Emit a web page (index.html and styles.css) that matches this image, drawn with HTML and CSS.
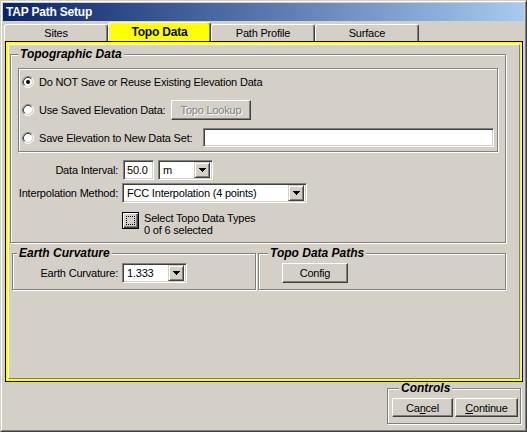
FILE: index.html
```html
<!DOCTYPE html>
<html>
<head>
<meta charset="utf-8">
<link rel="stylesheet" href="styles.css">
</head>
<body>
<div class="window">
  <div class="wf">
    <div class="titlebar">TAP Path Setup</div>
    <div class="tabs">
      <div class="tab">Sites</div>
      <div class="tab sel">Topo Data</div>
      <div class="tab">Path Profile</div>
      <div class="tab">Surface</div>
    </div>
    <div class="panel"><div class="panel-y"><div class="panel-in">
      <fieldset class="grp topo">
        <legend>Topographic Data</legend>
        <div class="radiobox">
          <div class="rrow">
            <svg class="radio" width="12" height="12" viewBox="0 0 12 12"><circle cx="6" cy="6" r="4.5" fill="#fff"/><path d="M2.11 9.89A5.5 5.5 0 0 1 9.89 2.11" fill="none" stroke="#808080"/><path d="M9.89 2.11A5.5 5.5 0 0 1 2.11 9.89" fill="none" stroke="#fff"/><path d="M2.82 9.18A4.5 4.5 0 0 1 9.18 2.82" fill="none" stroke="#404040"/><path d="M9.18 2.82A4.5 4.5 0 0 1 2.82 9.18" fill="none" stroke="#d4d0c8"/><circle cx="6" cy="6" r="2" fill="#000"/></svg>
            <span>Do NOT Save or Reuse Existing Elevation Data</span>
          </div>
          <div class="rrow">
            <svg class="radio" width="12" height="12" viewBox="0 0 12 12"><circle cx="6" cy="6" r="4.5" fill="#fff"/><path d="M2.11 9.89A5.5 5.5 0 0 1 9.89 2.11" fill="none" stroke="#808080"/><path d="M9.89 2.11A5.5 5.5 0 0 1 2.11 9.89" fill="none" stroke="#fff"/><path d="M2.82 9.18A4.5 4.5 0 0 1 9.18 2.82" fill="none" stroke="#404040"/><path d="M9.18 2.82A4.5 4.5 0 0 1 2.82 9.18" fill="none" stroke="#d4d0c8"/></svg>
            <span class="lbl2">Use Saved Elevation Data:</span><span class="btn dis lookup">Topo Lookup</span>
          </div>
          <div class="rrow">
            <svg class="radio" width="12" height="12" viewBox="0 0 12 12"><circle cx="6" cy="6" r="4.5" fill="#fff"/><path d="M2.11 9.89A5.5 5.5 0 0 1 9.89 2.11" fill="none" stroke="#808080"/><path d="M9.89 2.11A5.5 5.5 0 0 1 2.11 9.89" fill="none" stroke="#fff"/><path d="M2.82 9.18A4.5 4.5 0 0 1 9.18 2.82" fill="none" stroke="#404040"/><path d="M9.18 2.82A4.5 4.5 0 0 1 2.82 9.18" fill="none" stroke="#d4d0c8"/></svg>
            <span class="lbl3">Save Elevation to New Data Set:</span><span class="sunk newset"></span>
          </div>
        </div>
        <div class="form">
          <div class="frow">
            <span class="flabel">Data Interval:</span>
            <span class="sunk txt interval">50.0</span>
            <span class="sunk combo unit"><span class="val">m</span><span class="arr"><svg width="7" height="4" viewBox="0 0 7 4"><path d="M0 0h7v1h-1v1h-1v1h-1v1h-1v-1h-1v-1h-1v-1h-1z" fill="#000"/></svg></span></span>
          </div>
          <div class="frow r2">
            <span class="flabel">Interpolation Method:</span>
            <span class="sunk combo method"><span class="val">FCC Interpolation (4 points)</span><span class="arr"><svg width="7" height="4" viewBox="0 0 7 4"><path d="M0 0h7v1h-1v1h-1v1h-1v1h-1v-1h-1v-1h-1v-1h-1z" fill="#000"/></svg></span></span>
          </div>
          <div class="frow r3">
            <span class="flabel"></span>
            <span class="selbtn"><span class="focus"></span></span>
            <span class="seltext">Select Topo Data Types<br>0 of 6 selected</span>
          </div>
        </div>
      </fieldset>
      <div class="lower">
        <fieldset class="grp earth">
          <legend>Earth Curvature</legend>
          <div class="erow">
            <span class="elabel">Earth Curvature:</span>
            <span class="sunk combo curv"><span class="val">1.333</span><span class="arr"><svg width="7" height="4" viewBox="0 0 7 4"><path d="M0 0h7v1h-1v1h-1v1h-1v1h-1v-1h-1v-1h-1v-1h-1z" fill="#000"/></svg></span></span>
          </div>
        </fieldset>
        <fieldset class="grp paths">
          <legend>Topo Data Paths</legend>
          <span class="btn config">Config</span>
        </fieldset>
      </div>
    </div></div></div>
    <div class="bottom">
      <fieldset class="grp controls">
        <legend>Controls</legend>
        <div class="btnrow">
          <span class="btn cancel">Ca<u>n</u>cel</span>
          <span class="btn cont"><u>C</u>ontinue</span>
        </div>
      </fieldset>
    </div>
  </div>
</div>
</body>
</html>
```

FILE: styles.css
```css
* { box-sizing: border-box; }
html, body { margin: 0; padding: 0; }
body {
  width: 527px; height: 432px; overflow: hidden;
  background: #d4d0c8;
  font-family: "Liberation Sans", Arial, sans-serif;
  font-size: 11px; color: #000; letter-spacing: -0.2px;
}
.window {
  width: 527px; height: 432px;
  border: 1px solid; border-color: #d4d0c8 #404040 #404040 #d4d0c8;
}
.wf {
  height: 100%;
  border: 1px solid; border-color: #fff #808080 #808080 #fff;
  padding: 1px;
  display: flex; flex-direction: column;
}
.titlebar {
  flex: none; height: 18px;
  background: linear-gradient(to right, #0a246a, #a6caf0);
  color: #fff; font-weight: bold; font-size: 12px; line-height: 18px;
  padding-left: 3px;
}
.tabs { flex: none; display: flex; align-items: flex-end; height: 20px; margin-left: 1px; }
.tab {
  width: 104px; height: 17px;
  border: 1px solid; border-bottom: none;
  border-color: #fff #404040 #404040 #fff;
  box-shadow: inset -1px 0 0 #808080;
  border-radius: 3px 3px 0 0;
  text-align: center; line-height: 16px;
}
.tab.sel {
  width: 103px; height: 19px;
  background: #ffff00; font-weight: bold; font-size: 12px; line-height: 18px;
}
.panel { flex: none; height: 341px; margin: 0 1px 0 2px; border: 1px solid #000; }
.panel-y { height: 100%; border: 2px solid #ffff00; }
.panel-in {
  height: 100%; padding-top: 3px;
  border: 1px solid; border-color: #fff #808080 #808080 #fff;
}
.grp {
  margin: 0; padding: 0; min-width: 0;
  border: 1px solid #808080;
  box-shadow: inset 1px 1px 0 #fff, 1px 1px 0 #fff;
}
legend {
  font-weight: bold; font-style: italic; font-size: 12px; line-height: 12px;
  padding: 0 2px; background: #d4d0c8; letter-spacing: 0;
}
.topo { margin-left: 1px; width: 496px; padding-bottom: 6px; }
.topo legend { margin-left: 7px; }
.radiobox {
  margin: 8px 0 0 7px; width: 480px; height: 84px;
  border: 1px solid #808080;
  box-shadow: inset 1px 1px 0 #fff, 1px 1px 0 #fff;
  padding: 3px 3px 0 3px;
  display: flex; flex-direction: column; gap: 8px;
}
.rrow { height: 20px; display: flex; align-items: center; }
.radio { flex: none; display: block; margin-right: 5px; }
.lbl2 { width: 132px; flex: none; }
.lbl3 { width: 164px; flex: none; }
.btn {
  display: flex; align-items: center; justify-content: center;
  border: 1px solid; border-color: #fff #404040 #404040 #fff;
  box-shadow: inset -1px -1px 0 #808080;
  background: #d4d0c8;
}
.dis { color: #808080; text-shadow: 1px 1px 0 #fff; }
.lookup { width: 80px; height: 20px; }
.sunk {
  background: #fff;
  border: 1px solid; border-color: #808080 #fff #fff #808080;
  box-shadow: inset 1px 1px 0 #404040, inset -1px -1px 0 #d4d0c8;
}
.newset { width: 292px; height: 19px; align-self: flex-start; }
.form { margin-top: 8px; }
.frow { display: flex; align-items: center; height: 20px; }
.frow.r2 { margin-top: 3px; }
.frow.r3 { margin-top: 9px; height: 24px; align-items: flex-start; }
.flabel { width: 111px; flex: none; text-align: right; padding-right: 4px; }
.txt { height: 20px; display: flex; align-items: center; padding-left: 3px; }
.interval { width: 31px; margin-left: 1px; }
.combo { display: flex; align-items: center; height: 20px; padding: 2px; }
.combo .val { flex: 1; padding-left: 2px; white-space: nowrap; overflow: hidden; }
.combo .arr {
  flex: none; width: 16px; height: 16px;
  display: flex; align-items: center; justify-content: center;
  background: #d4d0c8;
  border: 1px solid; border-color: #d4d0c8 #404040 #404040 #d4d0c8;
  box-shadow: inset 1px 1px 0 #fff, inset -1px -1px 0 #808080;
}
.unit { width: 55px; margin-left: 4px; }
.method { width: 185px; }
.selbtn {
  flex: none; width: 17px; height: 17px;
  border: 1px solid #000;
  box-shadow: inset 1px 1px 0 #fff, inset -1px -1px 0 #404040, inset -2px -2px 0 #808080;
  display: flex; align-items: center; justify-content: center;
}
.focus { width: 9px; height: 9px; border: 1px dotted #000; margin: 0 1px 1px 0; }
.seltext { margin-left: 5px; line-height: 12px; }
.lower { display: flex; margin-top: 4px; }
.earth { margin-left: 3px; width: 244px; height: 43px; }
.earth legend { margin-left: 4px; }
.paths { margin-left: 2px; width: 248px; height: 43px; }
.paths legend { margin-left: 9px; }
.erow { display: flex; align-items: center; margin-top: 4px; }
.elabel { width: 109px; flex: none; text-align: right; padding-right: 4px; }
.curv { width: 65px; }
.config { width: 66px; height: 20px; margin: 4px 0 0 23px; }
.bottom { flex: 1; display: flex; justify-content: flex-end; padding-right: 3px; }
.controls { width: 134px; height: 42px; padding-left: 4px; }
.controls legend { margin-left: 7px; }
.btnrow { display: flex; gap: 2px; margin-top: 4px; }
.cancel { width: 61px; height: 19px; }
.cont { width: 63px; height: 19px; }
```
